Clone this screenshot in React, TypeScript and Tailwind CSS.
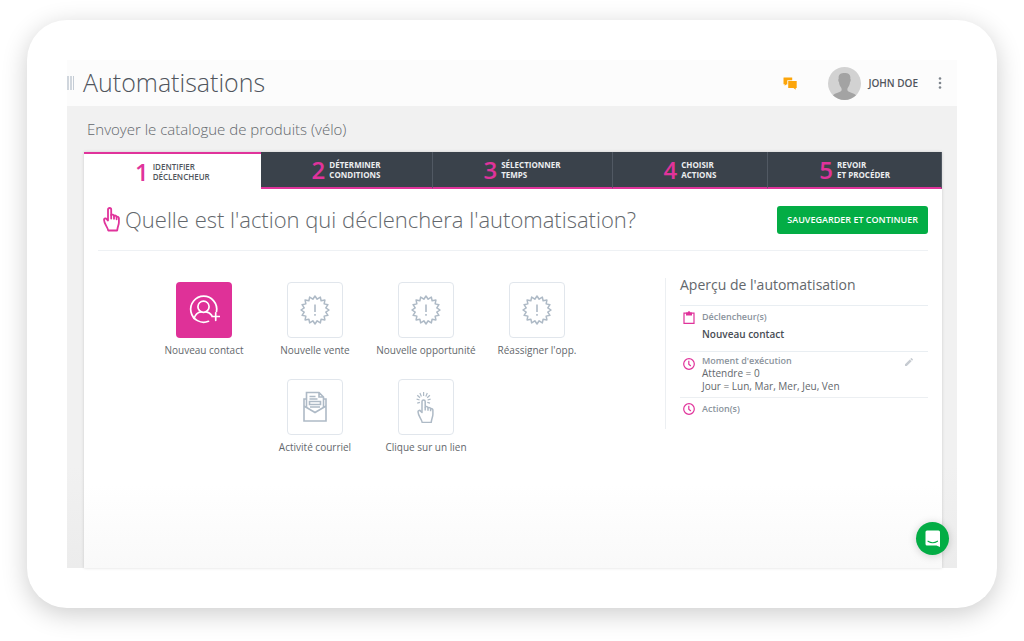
import type { ReactNode } from "react";

const steps = [
  ["IDENTIFIER", "DÉCLENCHEUR"],
  ["DÉTERMINER", "CONDITIONS"],
  ["SÉLECTIONNER", "TEMPS"],
  ["CHOISIR", "ACTIONS"],
  ["REVOIR", "ET PROCÉDER"],
];

function HandShape() {
  return (
    <>
      <path d="M5 13.5V2.6a1.6 1.6 0 0 1 3.2 0V8c1-.8 2.5-.4 2.8.8 1-.6 2.3-.2 2.6.9 1.3-.3 2.3.4 2.3 1.6v4c0 2.600-1.300 4.200-1.700 8.200H5.200C4.800 20 1.200 17.500 1 12.800c0-1.600 1.900-1.900 2.600-.6z" />
      <path d="M8.200 8v3.500M11 8.800v3M13.600 9.700v2.600" />
    </>
  );
}

function HandIcon() {
  return (
    <svg aria-hidden="true" className="h-[25px] w-[17px] shrink-0" viewBox="0 0 17 25" fill="none" stroke="#e0339b" strokeWidth="1.8" strokeLinejoin="round" strokeLinecap="round">
      <HandShape />
    </svg>
  );
}

function ContactIcon() {
  return (
    <svg aria-hidden="true" className="size-8" viewBox="0 0 32 32" fill="none" stroke="white" strokeWidth="1.7" strokeLinecap="round">
      <path d="M28.500 17.500A13 13 0 1 0 20.500 27.300" />
      <circle cx="15.500" cy="12.700" r="5.600" />
      <path d="M6 24.500c1.200-3.800 4.200-6.300 7-6.500M18 18c2.700.2 4.600 1.700 5.800 3.500M24 22.500h7.500M27.700 18.800v7.500" />
    </svg>
  );
}

const burst = Array.from({ length: 32 }, (_, i) => {
  const radius = i % 2 === 0 ? 14 : 11;
  const angle = (i * Math.PI) / 16;
  return `${16 + radius * Math.sin(angle)},${16 - radius * Math.cos(angle)}`;
}).join(" ");

function BurstIcon() {
  return (
    <svg aria-hidden="true" className="size-8" viewBox="0 0 32 32" fill="none" stroke="#aebac6" strokeWidth="1.500">
      <polygon points={burst} strokeLinejoin="round" />
      <path d="M16 10.500v7.500M16 20v1.800" strokeWidth="1.600" />
    </svg>
  );
}

function MailIcon() {
  return (
    <svg aria-hidden="true" className="h-8 w-6" viewBox="0 0 24 32" fill="none" stroke="#aebac6" strokeWidth="1.600">
      <path d="M3.500 8H1v22h22V8h-2.500M1 15l11 6.500L23 15" />
      <path d="M3.500 16.500V1.500H16l4.500 4.500v10.500M16 1.500V6h4.500M6.500 5.500h6M6.500 8h8M6.500 10.500h11v3h-11zM7 16h10" />
    </svg>
  );
}

function ClickIcon() {
  return (
    <svg aria-hidden="true" className="h-8 w-5" viewBox="-1 -8 20 32" fill="none" stroke="#aebac6" strokeWidth="1.500" strokeLinejoin="round">
      <HandShape />
      <path d="M6.600-3v-4M8.800-2.600l1.500-3.500M4.400-2.600 2.900-6.100M10.200-1.200l2.700-2.600M3-1.200.3-3.800M10.600 1l3-.8M2.600 1l-3-.8M10.300 3.300l2.700.8M2.900 3.300l-2.700.8" strokeWidth="1.200" />
    </svg>
  );
}

function ClockIcon() {
  return (
    <svg aria-hidden="true" className="size-3" viewBox="0 0 12 12" fill="none" stroke="#e0339b" strokeWidth="1.200">
      <circle cx="6" cy="6" r="5.300" />
      <path d="M5.800 2.800v3.400L7.800 8" />
    </svg>
  );
}

function ClipboardIcon() {
  return (
    <svg aria-hidden="true" className="h-[13px] w-3" viewBox="0 0 12 13" fill="none" stroke="#e0339b" strokeWidth="1.200">
      <path d="M1 2.200h10v10.200H1z" />
      <path d="M3 1.500h1.700a1.300 1.300 0 0 1 2.600 0H9v3H3z" fill="#e0339b" stroke="none" />
    </svg>
  );
}

function Trigger({ label, icon, selected = false }: { label: string; icon: ReactNode; selected?: boolean }) {
  return (
    <button type="button" aria-pressed={selected} className="flex w-[111px] flex-col items-center gap-1">
      <span
        className={
          selected
            ? "flex size-14 items-center justify-center rounded bg-[#df3198]"
            : "flex size-14 items-center justify-center rounded border border-[#e1e6ec] bg-white"
        }
      >
        {icon}
      </span>
      <span className="text-[10px] leading-[17px] whitespace-nowrap text-[#63676c]">{label}</span>
    </button>
  );
}

export default function App() {
  return (
    <div className="flex min-h-screen flex-col bg-white px-[27px] pt-5 pb-[33px] font-['Open_Sans',sans-serif]">
      <div className="flex flex-1 flex-col rounded-[40px] bg-white p-10 shadow-[0_6px_26px_rgba(0,0,0,0.2)]">
        <div className="relative flex flex-1 flex-col bg-linear-to-b from-[#f1f1f1] from-80% to-[#ececec]">
          <header className="flex h-[46px] items-center bg-[#fcfcfc] pr-3">
            <span aria-hidden="true" className="flex gap-px">
              <span className="h-[14px] w-0.5 bg-[#d0d6dd]" />
              <span className="h-[14px] w-0.5 bg-[#d0d6dd]" />
              <span className="h-[14px] w-px bg-[#c4ccd5]" />
            </span>
            <h1 className="ml-[9px] flex-1 text-[25px] font-light text-[#50555c]">Automatisations</h1>
            <button type="button" aria-label="Messages" className="mr-[30px]">
              <svg aria-hidden="true" className="h-[13px] w-[15px]" viewBox="0 0 15 13" fill="#fca50a">
                <path d="M.8.500h8.400v2.700H4.300v4.200H3.200L1.700 8.700V7.300H.500V.8z" />
                <path d="M5.200 4h8.500v7h-1v1.700L10.500 11H5.200z" />
              </svg>
            </button>
            <svg aria-hidden="true" className="size-[33px]" viewBox="0 0 33 33">
              <circle cx="16.500" cy="16.500" r="16.500" fill="#d2d2d2" />
              <path d="M5 28.300c2-2.600 7.500-2.500 8.500-4.800.4-1.300 0-2.500-.6-3.300-1.300-1.600-1.700-3.300-1.900-5.200-.8-.5-1-3-.3-3.200-.6-4.300 1.800-5.800 5.800-5.800s6.400 1.500 5.800 5.800c.7.200.5 2.700-.3 3.200-.2 1.900-.6 3.600-1.900 5.200-.6.800-1 2-.6 3.300 1 2.300 6.500 2.200 8.500 4.800A16.500 16.500 0 0 1 5 28.300" fill="#a3a3a3" />
            </svg>
            <span className="ml-[7px] text-[10px] font-semibold text-[#50555c]">JOHN DOE</span>
            <button type="button" aria-label="Plus d'options" className="ml-[17px]">
              <svg aria-hidden="true" className="h-3 w-[10px]" viewBox="0 0 10 12" fill="#7e858d">
                <circle cx="5" cy="1.500" r="1.300" />
                <circle cx="5" cy="6" r="1.300" />
                <circle cx="5" cy="10.500" r="1.300" />
              </svg>
            </button>
          </header>

          <main className="flex flex-1 flex-col pr-[15px] pl-[17px]">
            <h2 className="pl-[3px] text-[15px] leading-[46px] font-light text-[#63676c]">Envoyer le catalogue de produits (vélo)</h2>

            <div className="flex-1 bg-linear-to-b from-white from-80% to-[#f9f9f9] shadow-[0_0_3px_rgba(0,0,0,0.15)]">
              <ol className="flex">
                {steps.map(([first, second], i) => (
                  <li key={first} className="flex flex-auto">
                    <button
                      type="button"
                      aria-current={i === 0 ? "step" : undefined}
                      className={
                        i === 0
                          ? "flex h-[37px] flex-1 items-center justify-center gap-1 border-t-2 border-[#e0339b] bg-white font-semibold text-[#50555c]"
                          : "flex h-[37px] flex-1 items-center justify-center gap-1 border-r border-b-2 border-r-[#515963] border-b-[#e0339b] bg-[#3a424b] font-bold text-[#eceef0]"
                      }
                    >
                      <span className="text-[24px] leading-[34px] font-semibold text-[#e0339b]">{i + 1}</span>
                      <span className="text-left text-[8px] leading-[10px]">
                        {first}
                        <br />
                        {second}
                      </span>
                    </button>
                  </li>
                ))}
              </ol>

              <div className="px-[14px]">
                <div className="flex h-[62px] items-center gap-[5px] border-b border-[#eef1f4] pl-[5px]">
                  <HandIcon />
                  <h3 className="flex-1 text-[22px] font-light text-[#63676c]">
                    Quelle est l'action qui déclenchera l'automatisation?
                  </h3>
                  <button type="button" className="h-7 rounded-[3px] bg-[#03ad45] px-[10px] text-[9px] font-semibold text-white">
                    SAUVEGARDER ET CONTINUER
                  </button>
                </div>

                <div className="flex items-start pt-[27px]">
                  <div className="flex-1 pt-1 pr-[22px]">
                    <div className="mx-auto flex max-w-[444px] flex-wrap justify-center gap-y-5">
                      <Trigger label="Nouveau contact" icon={<ContactIcon />} selected />
                      <Trigger label="Nouvelle vente" icon={<BurstIcon />} />
                      <Trigger label="Nouvelle opportunité" icon={<BurstIcon />} />
                      <Trigger label="Réassigner l'opp." icon={<BurstIcon />} />
                      <Trigger label="Activité courriel" icon={<MailIcon />} />
                      <Trigger label="Clique sur un lien" icon={<ClickIcon />} />
                    </div>
                  </div>

                  <aside className="w-[263px] border-l border-[#eceff2] pl-[14px] text-[#63676c]">
                    <h4 className="pb-[13px] text-[14px] leading-[14px]">Aperçu de l'automatisation</h4>
                    <section className="flex h-[46px] gap-[7px] border-t border-[#e9eef2] pt-[5px] pl-[3px]">
                      <ClipboardIcon />
                      <div className="text-[10px]">
                        <h5 className="text-[9px] leading-3 font-semibold text-[#8a939c]">Déclencheur(s)</h5>
                        <p className="pt-1 leading-[14px] font-semibold text-[#484d54]">Nouveau contact</p>
                      </div>
                    </section>
                    <section className="flex h-[46px] gap-[7px] border-t border-[#e9eef2] pt-[3px] pl-[3px]">
                      <span className="pt-[3px]">
                        <ClockIcon />
                      </span>
                      <div className="flex-1 text-[10px] leading-[13px]">
                        <h5 className="text-[9px] leading-3 font-semibold text-[#8a939c]">Moment d'exécution</h5>
                        <p>Attendre = 0</p>
                        <p>Jour = Lun, Mar, Mer, Jeu, Ven</p>
                      </div>
                      <button type="button" aria-label="Modifier" className="mt-[3px] mr-[15px] size-2">
                        <svg aria-hidden="true" className="size-2" viewBox="0 0 8 8" fill="#c6cbd1">
                          <path d="M0 8V6.200L4.800 1.400l1.800 1.800L1.800 8zM5.300.900l.7-.7q.4-.4.800 0l1 1q.4.400 0 .8l-.7.7z" />
                        </svg>
                      </button>
                    </section>
                    <section className="flex h-8 gap-[7px] border-t border-[#eceff2] pt-[5px] pl-[3px]">
                      <ClockIcon />
                      <h5 className="text-[9px] leading-3 font-semibold text-[#8a939c]">Action(s)</h5>
                    </section>
                  </aside>
                </div>
              </div>
            </div>
          </main>

          <button
            type="button"
            aria-label="Ouvrir le clavardage"
            className="absolute right-2 bottom-[13px] flex size-[33px] items-center justify-center rounded-full bg-[#03ad45] shadow-[0_1px_8px_rgba(0,0,0,0.18)]"
          >
            <svg aria-hidden="true" className="h-[17px] w-4" viewBox="0 0 16 17">
              <path d="M2 .500h11.500q1.500 0 1.500 1.500v15L11.500 15.500H2Q.5 15.500.5 14V2Q.5.500 2 .500" fill="white" />
              <path d="M3 11.200q4.700 3 9.500 0" fill="none" stroke="#03ad45" strokeWidth="1.100" strokeLinecap="round" />
            </svg>
          </button>
        </div>
      </div>
    </div>
  );
}
